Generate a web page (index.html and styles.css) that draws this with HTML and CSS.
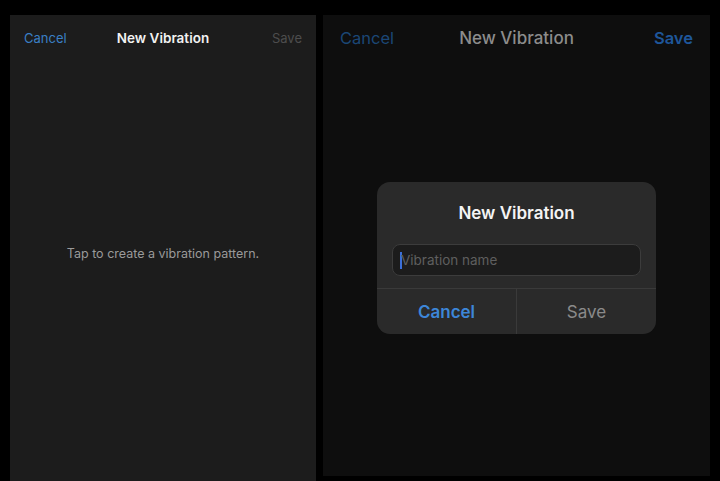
FILE: index.html
```html
<!DOCTYPE html>
<html>
<head>
    <title>New Vibration</title>
    <meta charset="utf-8" />
    <link rel="stylesheet" href="styles.css">
</head>
<body>
    <div class="screens">
        <div class="screen screen-left">
            <div class="nav-bar">
                <span class="nav-cancel">Cancel</span>
                <span class="nav-title">New Vibration</span>
                <span class="nav-save">Save</span>
            </div>
            <p class="hint">Tap to create a vibration pattern.</p>
        </div>

        <div class="screen screen-right">
            <div class="nav-bar nav-big">
                <span class="nav-cancel">Cancel</span>
                <span class="nav-title">New Vibration</span>
                <span class="nav-save">Save</span>
            </div>
            <div class="alert">
                <div class="alert-title">New Vibration</div>
                <div class="alert-input">
                    <span class="caret"></span>
                    <span class="placeholder">Vibration name</span>
                </div>
                <div class="alert-buttons">
                    <span class="alert-cancel">Cancel</span>
                    <span class="alert-save">Save</span>
                </div>
            </div>
        </div>
    </div>
</body>
</html>
```

FILE: styles.css
```css
html, body {
    height: 100%;
    margin: 0;
    background-color: #000000;
    font-family: Inter, Roboto, "Liberation Sans", sans-serif;
    overflow: hidden;
}

.screens {
    display: flex;
    gap: 7px;
    padding: 15px 0 0 10px;
}

.screen {
    display: flex;
    flex-direction: column;
}

.screen-left {
    width: 306px;
    height: 466px;
    background-color: #1c1c1c;
}

.screen-right {
    width: 387px;
    height: 461px;
    background-color: #0e0e0e;
}

.nav-bar {
    height: 46px;
    display: grid;
    grid-template-columns: 1fr auto 1fr;
    align-items: center;
    padding: 0 14px 0 14px;
    font-size: 13px;
}

.nav-cancel {
    color: #3a7fc4;
}

.nav-title {
    color: #f2f2f2;
    font-weight: 600;
    font-size: 13.5px;
}

.nav-save {
    color: #4d4d4d;
    text-align: right;
}

.nav-big {
    font-size: 16.5px;
    padding: 0 17px 0 17px;
}

.nav-big .nav-cancel {
    color: #1b4776;
}

.nav-big .nav-title {
    color: #8c8c8c;
    font-weight: 500;
    font-size: 17px;
}

.nav-big .nav-save {
    color: #1e569a;
    font-weight: 600;
}

.hint {
    margin: 184px 0 0 0;
    text-align: center;
    color: #9a9a9a;
    font-size: 12.5px;
    line-height: 18px;
}

.alert {
    width: 279px;
    margin: 121px auto 0 auto;
    background-color: #2a2a2a;
    border-radius: 13px;
    overflow: hidden;
}

.alert-title {
    padding-top: 20px;
    line-height: 22px;
    text-align: center;
    color: #f4f4f4;
    font-size: 17px;
    font-weight: 600;
}

.alert-input {
    margin: 20px 15px 12px 15px;
    height: 30px;
    border: 1px solid #3c3c3c;
    border-radius: 8px;
    background-color: #1c1c1c;
    display: flex;
    align-items: center;
    padding-left: 7px;
}

.caret {
    width: 2px;
    height: 17px;
    background-color: #3c6fd8;
}

.placeholder {
    color: #5f5f5f;
    font-size: 13.5px;
    margin-left: -1px;
}

.alert-buttons {
    display: flex;
    border-top: 1px solid #3a3a3a;
    height: 45px;
}

.alert-buttons span {
    flex: 1;
    display: flex;
    align-items: center;
    justify-content: center;
    font-size: 17px;
}

.alert-cancel {
    color: #3d86d8;
    font-weight: 600;
    border-right: 1px solid #3a3a3a;
}

.alert-save {
    color: #8a8a8a;
}
```
